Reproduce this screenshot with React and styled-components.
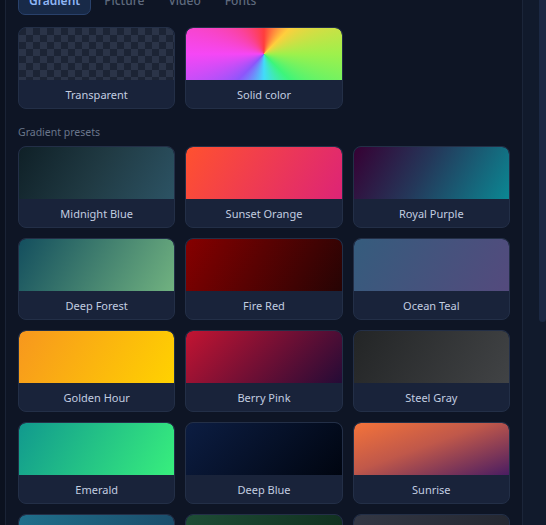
import React from 'react'
import styled, { createGlobalStyle } from 'styled-components'

const GlobalStyle = createGlobalStyle`
  html, body {
    margin: 0;
    padding: 0;
    background: #0c1221;
    overflow: hidden;
  }
  body {
    font-family: "Noto Sans", "Open Sans", sans-serif;
  }
`

const presets = [
  { name: 'Midnight Blue', bg: 'linear-gradient(120deg, #0f2027, #203a43 50%, #2c5364)' },
  { name: 'Sunset Orange', bg: 'linear-gradient(120deg, #ff512f, #dd2476)' },
  { name: 'Royal Purple', bg: 'linear-gradient(120deg, #360033, #24385a 45%, #0b8793)' },
  { name: 'Deep Forest', bg: 'linear-gradient(120deg, #134e5e, #71b280)' },
  { name: 'Fire Red', bg: 'linear-gradient(120deg, #860000, #5a0202 45%, #260404)' },
  { name: 'Ocean Teal', bg: 'linear-gradient(120deg, #355c7d, #544a7d)' },
  { name: 'Golden Hour', bg: 'linear-gradient(120deg, #f7971e, #ffd200)' },
  { name: 'Berry Pink', bg: 'linear-gradient(135deg, #c31432, #240b36)' },
  { name: 'Steel Gray', bg: 'linear-gradient(120deg, #232526, #414345)' },
  { name: 'Emerald', bg: 'linear-gradient(120deg, #11998e, #38ef7d)' },
  { name: 'Deep Blue', bg: 'linear-gradient(135deg, #0c1d42, #000510)' },
  { name: 'Sunrise', bg: 'linear-gradient(160deg, #f4733a, #c0584a 45%, #4a1d62)' },
  { name: 'Ocean Breeze', bg: 'linear-gradient(120deg, #1f6f8b, #1a4866)' },
  { name: 'Forest Night', bg: 'linear-gradient(120deg, #1e4d36, #0f2c1c)' },
  { name: 'Charcoal', bg: 'linear-gradient(120deg, #333744, #22252e)' },
]

const tabs = ['Gradient', 'Picture', 'Video', 'Fonts']

const Shell = styled.div`
  display: flex;
  height: 525px;
  overflow: hidden;
`
const LeftEdge = styled.div`
  width: 5px;
  background: #0b111f;
  border-right: 1px solid #1a2336;
`
const Panel = styled.div`
  width: 492px;
  padding: 0 12px;
  background: #0e1525;
  border-right: 1px solid #1b2539;
  overflow: hidden;
`
const Content = styled.div`
  margin-top: -14px;
`
const Gutter = styled.div`
  flex: 1;
  display: flex;
  justify-content: flex-end;
  background: #111a2c;
`
const Thumb = styled.div`
  width: 7px;
  height: 322px;
  background: #1b2843;
  border-radius: 0 0 4px 4px;
`
const TabRow = styled.div`
  display: flex;
  gap: 2px;
  height: 29px;
`
const Tab = styled.div`
  display: flex;
  align-items: center;
  padding: 0 10px;
  border-radius: 7px;
  font-size: 12px;
  font-weight: ${p => (p.active ? 600 : 500)};
  color: ${p => (p.active ? '#8fb6f5' : '#5f6a7e')};
  background: ${p => (p.active ? '#182a48' : 'transparent')};
  border: 1px solid ${p => (p.active ? '#29416b' : 'transparent')};
`
const Grid = styled.div`
  display: grid;
  grid-template-columns: repeat(3, 1fr);
  gap: 10px;
  margin-top: ${p => p.top || 0}px;
`
const Card = styled.div`
  height: 82px;
  box-sizing: border-box;
  display: flex;
  flex-direction: column;
  background: #19233a;
  border: 1px solid #232f47;
  border-radius: 8px;
  overflow: hidden;
`
const Preview = styled.div`
  height: 52px;
  flex: none;
  border-radius: 7px 7px 0 0;
`
const Checker = styled(Preview)`
  background: repeating-conic-gradient(#2b3448 0 25%, #1c2435 0 50%) 0 0 / 14px 14px;
`
const Rainbow = styled(Preview)`
  background: conic-gradient(
    hsl(0, 100%, 62%),
    hsl(45, 100%, 62%),
    hsl(90, 85%, 62%),
    hsl(140, 90%, 60%),
    hsl(190, 95%, 62%),
    hsl(260, 95%, 66%),
    hsl(300, 90%, 62%),
    hsl(330, 95%, 62%),
    hsl(360, 100%, 62%)
  );
`
const Label = styled.div`
  flex: 1;
  display: flex;
  align-items: center;
  justify-content: center;
  font-size: 11px;
  color: #c2cde0;
`
const SectionTitle = styled.div`
  margin: 16px 0 7px;
  font-size: 10.5px;
  line-height: 14px;
  color: #6a768b;
`

const App = () => {
  return (
    <>
      <GlobalStyle />
      <Shell>
        <LeftEdge />
        <Panel>
          <Content>
            <TabRow>
              {tabs.map(t => (
                <Tab key={t} active={t === 'Gradient'}>{t}</Tab>
              ))}
            </TabRow>
            <Grid top={12}>
              <Card>
                <Checker />
                <Label>Transparent</Label>
              </Card>
              <Card>
                <Rainbow />
                <Label>Solid color</Label>
              </Card>
            </Grid>
            <SectionTitle>Gradient presets</SectionTitle>
            <Grid>
              {presets.map(p => (
                <Card key={p.name}>
                  <Preview style={{ background: p.bg }} />
                  <Label>{p.name}</Label>
                </Card>
              ))}
            </Grid>
          </Content>
        </Panel>
        <Gutter>
          <Thumb />
        </Gutter>
      </Shell>
    </>
  )
}

export default App
